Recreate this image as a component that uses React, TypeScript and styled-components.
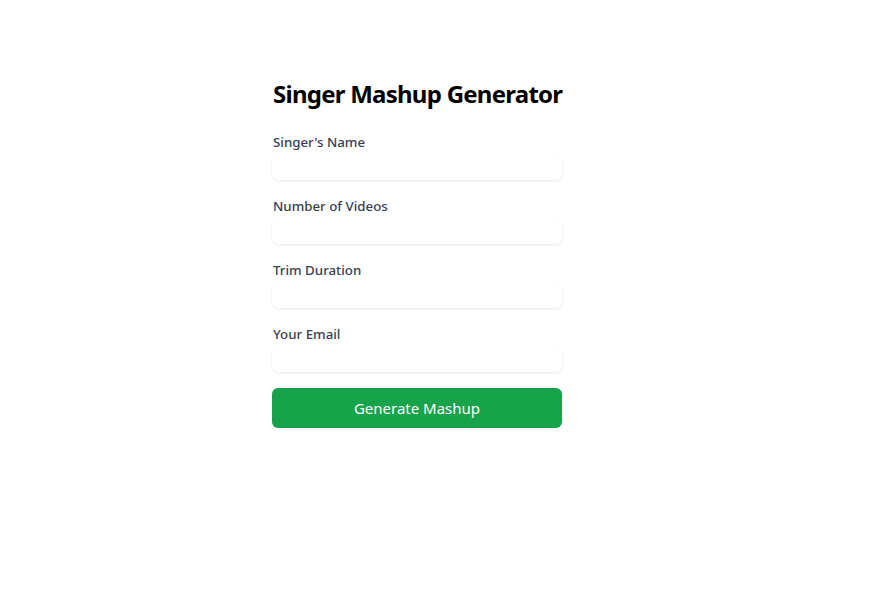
import React from "react";
import styled, { createGlobalStyle } from "styled-components";

const GlobalStyle = createGlobalStyle`
  html, body { margin: 0; padding: 0; background: #ffffff; }
  body { font-family: "Noto Sans", "Open Sans", sans-serif; }
  * { box-sizing: border-box; }
`;

const Page = styled.main`
  width: 869px;
  min-height: 604px;
  padding: 78px 0 0 272px;
`;

const Form = styled.form`
  width: 290px;
  display: flex;
  flex-direction: column;
`;

const Title = styled.h1`
  margin: 0 0 22px 1px;
  font-size: 24px;
  line-height: 32px;
  font-weight: 700;
  letter-spacing: -0.75px;
  color: #000000;
  white-space: nowrap;
`;

const Field = styled.div`
  display: flex;
  flex-direction: column;
  gap: 4px;
  margin-bottom: 16px;
`;

const Label = styled.label`
  font-size: 13.3px;
  line-height: 20px;
  font-weight: 500;
  color: #374151;
  padding-left: 1px;
`;

const Input = styled.input`
  height: 24px;
  width: 100%;
  border: none;
  border-radius: 6px;
  background: #ffffff;
  box-shadow: 0 1px 3px rgba(0, 0, 0, 0.08), 0 0 1px rgba(0, 0, 0, 0.06);
  outline: none;
  font: inherit;
  padding: 0 8px;
`;

const Button = styled.button`
  height: 40px;
  width: 100%;
  border: none;
  border-radius: 6px;
  background: #17a34a;
  color: #ffffff;
  font-family: inherit;
  font-size: 15px;
  cursor: pointer;
`;

const fields = [
  { id: "singer", label: "Singer's Name", type: "text" },
  { id: "count", label: "Number of Videos", type: "number" },
  { id: "trim", label: "Trim Duration", type: "number" },
  { id: "email", label: "Your Email", type: "email" },
];

export default function App() {
  return (
    <>
      <GlobalStyle />
      <Page>
        <Form onSubmit={(e) => e.preventDefault()}>
          <Title>Singer Mashup Generator</Title>
          {fields.map((f) => (
            <Field key={f.id}>
              <Label htmlFor={f.id}>{f.label}</Label>
              <Input id={f.id} type={f.type} />
            </Field>
          ))}
          <Button type="submit">Generate Mashup</Button>
        </Form>
      </Page>
    </>
  );
}
